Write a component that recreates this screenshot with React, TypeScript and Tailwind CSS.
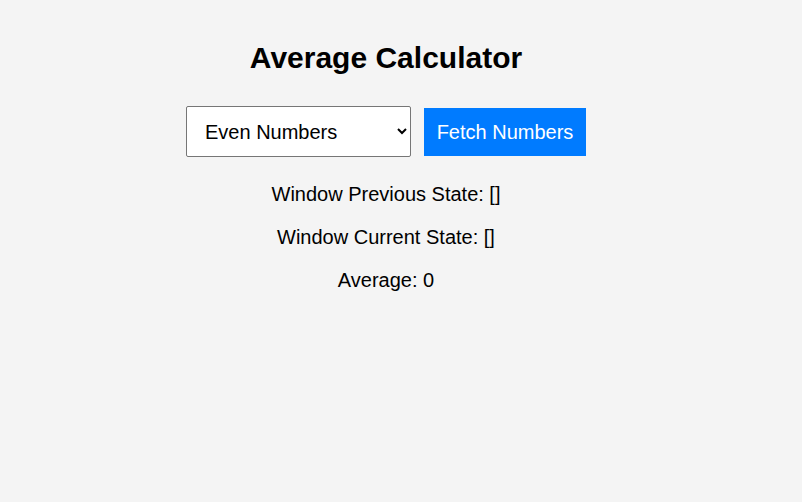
import React from "react";

export default function App() {
  return (
    <div
      className="min-h-[502px] w-full bg-[#f4f4f4] text-black"
      style={{ fontFamily: '"Liberation Sans", Arial, sans-serif' }}
    >
      <div className="w-[772px] flex flex-col items-center pt-[40px]">
        <h1 className="text-[30px] font-bold leading-[35px]">Average Calculator</h1>
        <div className="flex items-center gap-[13px] mt-[31px]">
          <select
            defaultValue="even"
            className="w-[225px] h-[51px] bg-white border border-[#767676] rounded-[2px] pl-[14px] pr-2 text-[20px]"
          >
            <option value="even">Even Numbers</option>
            <option value="odd">Odd Numbers</option>
            <option value="prime">Prime Numbers</option>
            <option value="fib">Fibonacci Numbers</option>
          </select>
          <button className="h-[48px] w-[162px] bg-[#007bff] text-white text-[20px]">
            Fetch Numbers
          </button>
        </div>
        <div className="flex flex-col items-center gap-[20px] mt-[26px] text-[20px] leading-[23px]">
          <p>Window Previous State: []</p>
          <p>Window Current State: []</p>
          <p>Average: 0</p>
        </div>
      </div>
    </div>
  );
}
